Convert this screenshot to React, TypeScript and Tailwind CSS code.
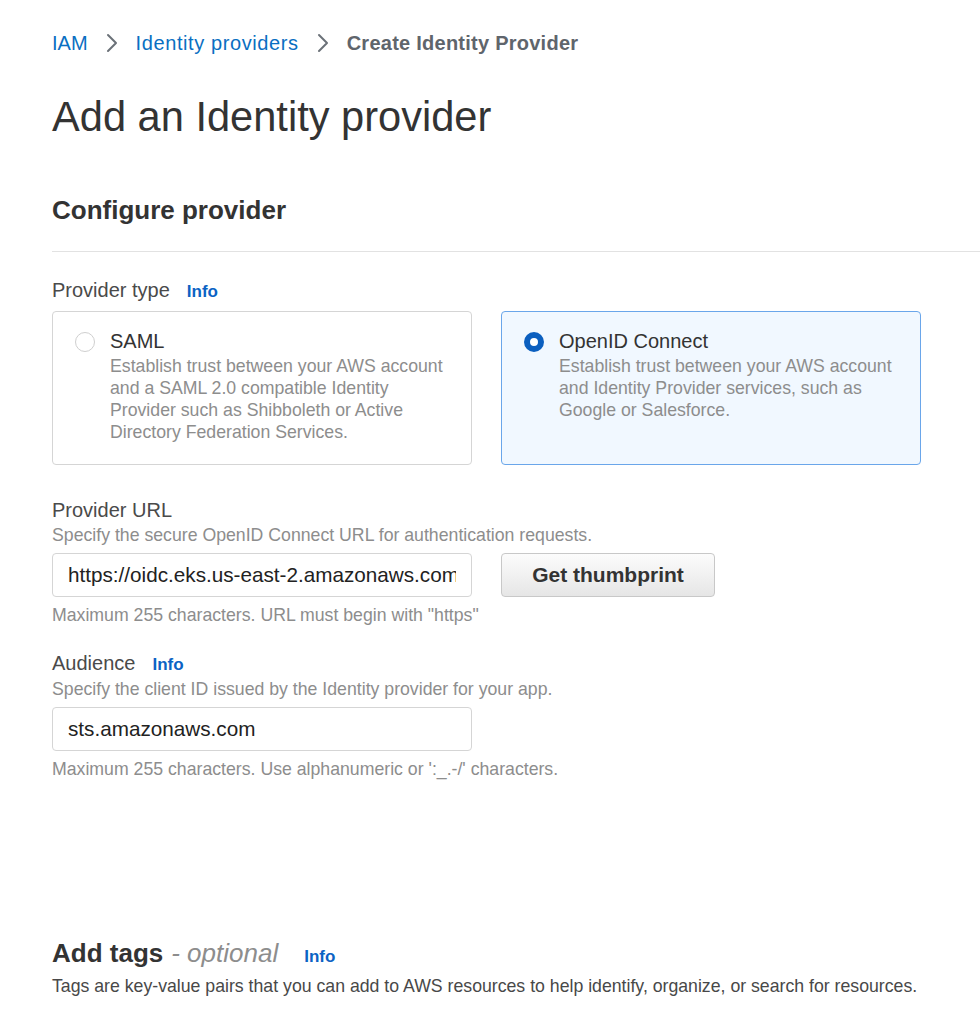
import React from "react";

function Chevron() {
  return (
    <svg width="12" height="20" viewBox="0 0 12 20" className="mx-[18px]" aria-hidden>
      <polyline points="2,2 10,10 2,18" fill="none" stroke="#6b7178" strokeWidth="2" strokeLinecap="round" strokeLinejoin="round" />
    </svg>
  );
}

function Info({ className = "" }: { className?: string }) {
  return <a className={`text-[17px] font-bold text-[#0b63c4] ${className}`}>Info</a>;
}

function RadioCard({
  title,
  description,
  selected,
}: {
  title: string;
  description: string;
  selected?: boolean;
}) {
  return (
    <div
      className={`flex h-[154px] w-[420px] gap-[15px] rounded-[4px] border pl-[22px] pr-[20px] pt-[17px] ${
        selected ? "border-[#6aa6ea] bg-[#f1f8ff]" : "border-[#d5d5d5] bg-white"
      }`}
    >
      <div className="pt-[3px]">
        {selected ? (
          <div className="h-[20px] w-[20px] rounded-full border-[6px] border-[#0b5fbf] bg-white" />
        ) : (
          <div className="h-[20px] w-[20px] rounded-full border border-[#cfcfcf] bg-white" />
        )}
      </div>
      <div>
        <div className="text-[20px] leading-[24px] text-[#333]">{title}</div>
        <div className="mt-[2px] text-[17.7px] leading-[22px] text-[#8d8d8d]">{description}</div>
      </div>
    </div>
  );
}

export default function App() {
  return (
    <div className="min-h-[1024px] w-[980px] overflow-hidden bg-white pl-[52px] pt-[31px] font-['Liberation_Sans',Arial,sans-serif]">
      <nav className="flex h-[24px] items-center text-[20px] leading-[24px]">
        <a className="text-[#0a6fc2]">IAM</a>
        <Chevron />
        <a className="tracking-[0.6px] text-[#0a6fc2]">Identity providers</a>
        <Chevron />
        <span className="font-bold tracking-[0.25px] text-[#5f656c]">Create Identity Provider</span>
      </nav>

      <h1 className="mt-[37px] text-[41.6px] leading-[50px] text-[#333]">Add an Identity provider</h1>

      <h2 className="mt-[52px] text-[26px] font-bold leading-[32px] text-[#333]">Configure provider</h2>
      <div className="mt-[25px] h-px bg-[#e2e2e2]" />

      <div className="mt-[26px] flex h-[24px] items-baseline gap-[17px] leading-[24px]">
        <span className="text-[20px] text-[#4a4a4a]">Provider type</span>
        <Info />
      </div>

      <div className="mt-[9px] flex gap-[29px]">
        <RadioCard
          title="SAML"
          description="Establish trust between your AWS account and a SAML 2.0 compatible Identity Provider such as Shibboleth or Active Directory Federation Services."
        />
        <RadioCard
          selected
          title="OpenID Connect"
          description="Establish trust between your AWS account and Identity Provider services, such as Google or Salesforce."
        />
      </div>

      <div className="mt-[33px] text-[20px] leading-[24px] text-[#4a4a4a]">Provider URL</div>
      <div className="mt-[2px] text-[17.7px] leading-[22px] text-[#8d8d8d]">
        Specify the secure OpenID Connect URL for authentication requests.
      </div>
      <div className="mt-[7px] flex gap-[29px]">
        <input
          readOnly
          value="https://oidc.eks.us-east-2.amazonaws.com/id/EXAMPLED539D4633E53DE1B71EXAMPLE"
          className="h-[44px] w-[420px] rounded-[4px] border border-[#d5d5d5] px-[15px] text-[20.7px] text-[#222] outline-none"
        />
        <button className="h-[44px] w-[214px] rounded-[4px] border border-[#c8c8c8] bg-gradient-to-b from-[#fcfcfc] to-[#e6e6e6] text-[21px] font-bold text-[#333]">
          Get thumbprint
        </button>
      </div>
      <div className="mt-[7px] text-[17.7px] leading-[22px] text-[#8d8d8d]">
        Maximum 255 characters. URL must begin with "https"
      </div>

      <div className="mt-[25px] flex h-[24px] items-baseline gap-[17px] leading-[24px]">
        <span className="text-[20px] text-[#4a4a4a]">Audience</span>
        <Info />
      </div>
      <div className="mt-[3px] text-[17.7px] leading-[22px] text-[#8d8d8d]">
        Specify the client ID issued by the Identity provider for your app.
      </div>
      <input
        readOnly
        value="sts.amazonaws.com"
        className="mt-[7px] block h-[44px] w-[420px] rounded-[4px] border border-[#d5d5d5] px-[15px] text-[20.7px] text-[#222] outline-none"
      />
      <div className="mt-[7px] text-[17.7px] leading-[22px] text-[#8d8d8d]">
        Maximum 255 characters. Use alphanumeric or ':_.-/' characters.
      </div>

      <div className="mt-[157px] flex h-[32px] items-baseline leading-[32px]">
        <span className="text-[26px] font-bold text-[#333]">Add tags</span>
        <span className="ml-[8px] text-[26px] italic text-[#8d8d8d]">- optional</span>
        <Info className="ml-[26px]" />
      </div>
      <div className="mt-[6px] text-[17.7px] leading-[22px] text-[#484848]">
        Tags are key-value pairs that you can add to AWS resources to help identify, organize, or search for resources.
      </div>
    </div>
  );
}
